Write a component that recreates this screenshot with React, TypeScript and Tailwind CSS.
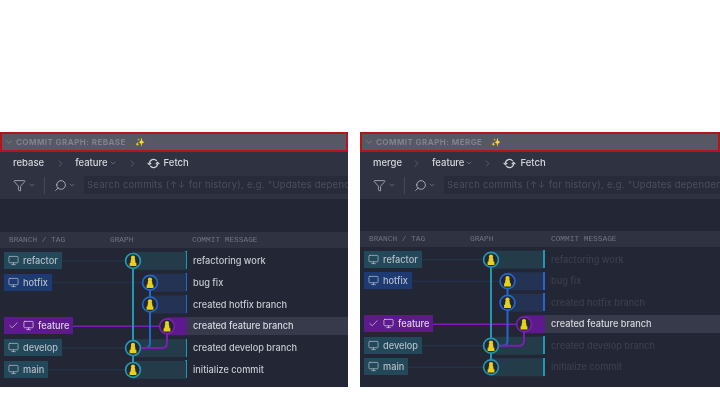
import { Check, ChevronDown, ChevronRight, Monitor, Search, Filter } from "lucide-react";

type Tone = "teal" | "blue" | "purple";

const rows: { branch?: string; msg: string; tone: Tone; col: number }[] = [
  { branch: "refactor", msg: "refactoring work", tone: "teal", col: 0 },
  { branch: "hotfix", msg: "bug fix", tone: "blue", col: 1 },
  { msg: "created hotfix branch", tone: "blue", col: 1 },
  { branch: "feature", msg: "created feature branch", tone: "purple", col: 2 },
  { branch: "develop", msg: "created develop branch", tone: "teal", col: 0 },
  { branch: "main", msg: "initialize commit", tone: "teal", col: 0 },
];

const stroke: Record<Tone, string> = { teal: "#2596b0", blue: "#2268c8", purple: "#7a1fb0" };
const band: Record<Tone, string> = { teal: "#243b4a", blue: "#243353", purple: "#5d1a8c" };

function Pawn({ x, y }: { x: number; y: number }) {
  return (
    <g transform={`translate(${x} ${y})`} fill="#e6d21c">
      <circle cx="0" cy="-3.2" r="2.1" />
      <path d="M-2 -2 H2 L2.6 2 H3.4 V5.2 H-3.4 V2 H-2.6 Z" />
    </g>
  );
}

function Graph({ base, step, rh, bar }: { base: number; step: number; rh: number; bar: number }) {
  const xs = [base, base + step, base + step * 2];
  const cy = (i: number) => rh * i + rh / 2;
  return (
    <svg className="absolute left-0 top-0 z-0" width={bar} height={rh * 6}>
      {rows.map((r, i) => (
        <rect key={i} x={xs[r.col]} y={cy(i) - 9} width={bar - xs[r.col]} height="18" fill={band[r.tone]} />
      ))}
      {rows.map((r, i) =>
        r.branch ? (
          <line key={i} x1="40" x2={xs[r.col]} y1={cy(i)} y2={cy(i)} stroke={r.tone === "purple" ? "#7a1fb0" : band[r.tone]} strokeWidth={r.tone === "purple" ? 1.5 : 1} />
        ) : null,
      )}
      <line x1={xs[0]} x2={xs[0]} y1={cy(0)} y2={cy(5)} stroke={stroke.teal} strokeWidth="2" />
      <path d={`M${xs[1]} ${cy(1)} V${cy(4) - 5} Q${xs[1]} ${cy(4)} ${xs[1] - 5} ${cy(4)} H${xs[0]}`} fill="none" stroke={stroke.blue} strokeWidth="2" />
      <path d={`M${xs[2]} ${cy(3)} V${cy(4) - 5} Q${xs[2]} ${cy(4)} ${xs[2] - 5} ${cy(4)} H${xs[0]}`} fill="none" stroke={stroke.purple} strokeWidth="2" />
      {rows.map((r, i) => (
        <g key={i}>
          <circle cx={xs[r.col]} cy={cy(i)} r="7.4" fill="#232635" stroke={stroke[r.tone]} strokeWidth="1.7" />
          <Pawn x={xs[r.col]} y={cy(i)} />
        </g>
      ))}
    </svg>
  );
}

function Pill({ name, tone }: { name: string; tone: Tone }) {
  const bg = tone === "teal" ? "bg-[#23485a]" : tone === "blue" ? "bg-[#1e3a72]" : "bg-[#5d1a8c]";
  const fg = tone === "purple" ? "text-[#ddd0e8]" : "text-[#b4bdc8]";
  return (
    <div className={`relative z-10 flex h-[17px] items-center gap-[4px] pl-[4px] pr-[4px] text-[9.2px] font-medium ${bg} ${fg}`}>
      {tone === "purple" && <Check size={11} strokeWidth={1.5} />}
      <Monitor size={11} strokeWidth={1.6} />
      <span className="pt-[1px]">{name}</span>
    </div>
  );
}

function FetchIcon() {
  return (
    <svg width="13" height="13" viewBox="0 0 16 16" fill="none" stroke="#d4d6dc" strokeWidth="1.5">
      <path d="M3 8a5 5 0 0 1 9-3M13 8a5 5 0 0 1-9 3" />
      <path d="M0.8 7.2 L3 9.4 L5.2 7.2" />
      <path d="M10.8 8.8 L13 6.6 L15.2 8.8" />
    </svg>
  );
}

function Panel({
  title,
  name,
  dim,
  width,
  gapA,
  gapD,
  gapC,
  gapB,
  base,
  step,
  bar,
  rh,
  headTop,
  graphX,
  msgX,
}: {
  title: string;
  name: string;
  dim?: boolean;
  width: string;
  gapA: string;
  gapD: string;
  gapC: string;
  gapB: string;
  base: number;
  step: number;
  bar: number;
  rh: number;
  headTop: string;
  graphX: string;
  msgX: string;
}) {
  return (
    <div className={`flex h-[255px] flex-col overflow-hidden bg-[#232635] ${width}`}>
      <div className="flex h-[20px] shrink-0 items-center gap-[2px] border-2 border-[#b5141b] bg-[#565963] pl-[2px]">
        <ChevronDown size={10} className="text-[#7d818b]" />
        <span className="text-[8px] font-bold tracking-[0.45px] text-[#7f838e]">{title}</span>
        <span className="ml-[7px] text-[8px] leading-none text-[#d8c468]">✨</span>
      </div>
      <div className="h-[47px] shrink-0 bg-[#2f3240] text-[9.5px] text-[#d4d6dc]">
        <div className="flex h-[22px] items-center pl-[13px]">
          <span className="font-medium">{name}</span>
          <ChevronRight size={11} className={`text-[#6d707c] ${gapA}`} strokeWidth={1.4} />
          <span className={`font-medium ${gapD}`}>feature</span>
          <ChevronDown size={8} className="ml-[1px] text-[#80838e]" />
          <ChevronRight size={11} className={`text-[#6d707c] ${gapC}`} strokeWidth={1.4} />
          <span className={gapB}><FetchIcon /></span>
          <span className="ml-[4px] font-medium">Fetch</span>
        </div>
        <div className="flex h-[22px] items-center pl-[13px]">
          <Filter size={13} className="text-[#b6b9c2]" strokeWidth={1.5} />
          <ChevronDown size={8} className="ml-[2px] text-[#80838e]" />
          <div className="ml-[8px] h-[17px] w-px bg-[#454856]" />
          <Search size={13} className="ml-[9px] -scale-x-100 text-[#b6b9c2]" strokeWidth={1.6} />
          <ChevronDown size={8} className="ml-[1px] text-[#80838e]" />
          <div className="ml-[8px] flex h-[18px] min-w-0 flex-1 items-center overflow-hidden whitespace-nowrap bg-[#282b39] pl-[3px] text-[9.5px] tracking-[0.25px] text-[#4c4f5d]">
            Search commits (↑↓ for history), e.g. "Updates dependencies" author:eamodio
          </div>
        </div>
      </div>
      <div className={`flex h-[16px] shrink-0 items-center bg-[#2f3240] pl-[9px] pt-[1px] text-[7.8px] text-[#71747f] ${headTop}`}>
        <span className="w-[101px]">BRANCH / TAG</span>
        <span className={graphX}>GRAPH</span>
        <span>COMMIT MESSAGE</span>
      </div>
      <div className="relative mt-[1.5px]">
        <Graph base={base} step={step} rh={rh} bar={bar} />
        {rows.map((r, i) => {
          const selected = r.tone === "purple";
          const textColor = selected ? "text-[#d6d8de]" : dim ? "text-[#3c3f4c]" : "text-[#c4c7cf]";
          return (
            <div key={i} className={`flex items-center ${rh === 21.5 ? "h-[21.5px]" : "h-[21.8px]"}`}>
              <div className={`flex shrink-0 items-center pl-[4px] ${msgX}`}>{r.branch && <Pill name={r.branch} tone={r.tone} />}</div>
              <div
                className={`flex h-[18px] flex-1 items-center pl-[6px] text-[9.2px] font-medium ${selected ? "bg-[#363a4a]" : ""} ${textColor}`}
              >
                <div className={`-ml-[6px] mr-[6px] h-[18px] w-[2px] ${r.tone === "teal" ? "bg-[#2596b0]" : r.tone === "blue" ? "bg-[#2268c8]" : "bg-[#5d1a8c]"}`} />
                <span className="pt-[1px]">{r.msg}</span>
              </div>
            </div>
          );
        })}
      </div>
    </div>
  );
}

export default function App() {
  return (
    <div className="h-[405px] w-[720px] overflow-hidden bg-white pt-[132px] font-['Inter','Liberation_Sans',sans-serif] blur-[0.5px]">
      <div className="flex gap-[12px]">
        <Panel
          title="COMMIT GRAPH: REBASE"
          name="rebase"
          width="w-[348px]"
          gapA="ml-[11px]"
          gapD="ml-[9px]"
          gapC="ml-[10px]"
          gapB="ml-[9px]"
          base={133}
          step={17}
          bar={186}
          rh={21.8}
          headTop="mt-[33px] font-['Liberation_Mono',monospace]"
          graphX="w-[82px]"
          msgX="w-[185px]"
        />
        <Panel
          dim
          title="COMMIT GRAPH: MERGE"
          name="merge"
          width="w-[360px]"
          gapA="ml-[9px]"
          gapD="ml-[10px]"
          gapC="ml-[9px]"
          gapB="ml-[10px]"
          base={131}
          step={16.5}
          bar={183}
          rh={21.5}
          headTop="mt-[32px] font-['Liberation_Mono',monospace]"
          graphX="w-[81px]"
          msgX="w-[183px]"
        />
      </div>
    </div>
  );
}
